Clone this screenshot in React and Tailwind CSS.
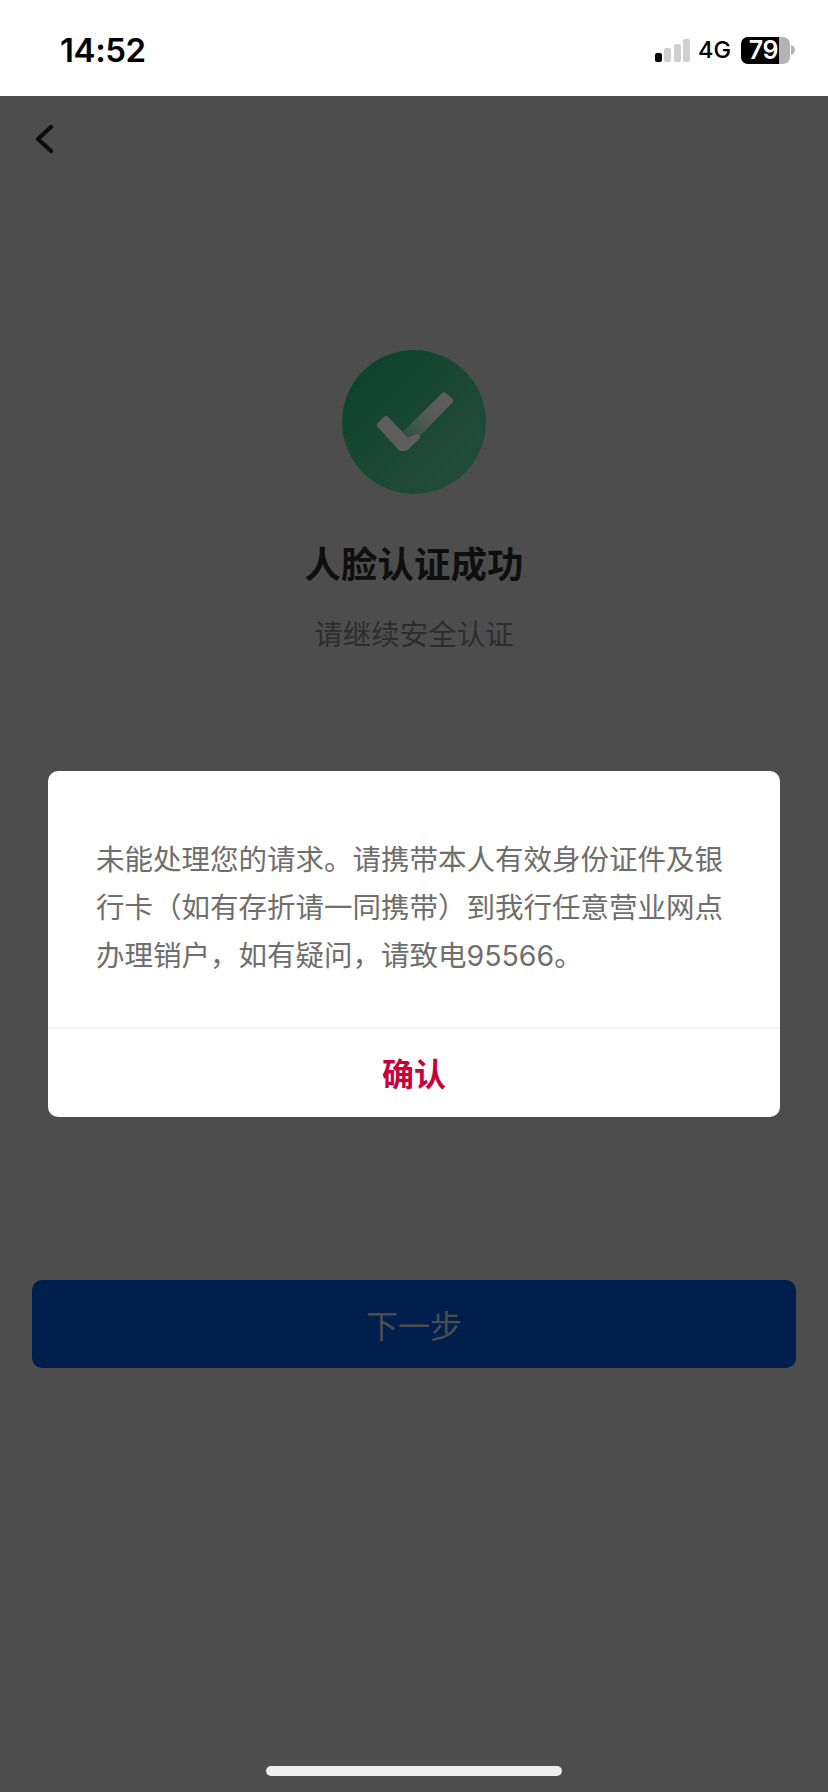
import React from "react";

const cjk = '"Noto Sans CJK SC", "Liberation Sans", sans-serif';

function SignalBars() {
  return (
    <div className="flex items-end gap-[2.5px] h-[23px]">
      <span className="w-[7px] h-[9px] rounded-[2px] bg-black" />
      <span className="w-[7px] h-[14px] rounded-[2px] bg-[#cfcfcf]" />
      <span className="w-[7px] h-[18px] rounded-[2px] bg-[#cfcfcf]" />
      <span className="w-[7px] h-[23px] rounded-[2px] bg-[#cfcfcf]" />
    </div>
  );
}

function Battery() {
  return (
    <div className="flex items-center">
      <div className="w-[49px] h-[27px] rounded-[7px] bg-[#b3b3b3]">
        <div className="w-[38px] h-full pr-[1px] rounded-l-[7px] bg-black flex items-center justify-end text-white text-[25px] font-semibold leading-none font-['Inter'] tracking-[-0.5px]">
          79
        </div>
      </div>
      <svg width="4" height="10" viewBox="0 0 4 10" className="ml-[1px]">
        <path d="M0 0c2.4.6 4 2.6 4 5s-1.6 4.4-4 5z" fill="#b3b3b3" />
      </svg>
    </div>
  );
}

function StatusBar() {
  return (
    <div className="h-[96px] bg-white flex items-center justify-between pl-[60px] pr-[33px] pt-[4px]">
      <span className="text-[33px] font-semibold leading-none text-black font-['Inter'] tracking-[-0.4px]">14:52</span>
      <div className="flex items-center">
        <SignalBars />
        <span className="ml-[8px] mr-[10px] text-[23.5px] font-medium leading-none text-black font-['Inter']">4G</span>
        <Battery />
      </div>
    </div>
  );
}

function SuccessBadge() {
  return (
    <div className="w-[144px] h-[144px] rounded-full bg-gradient-to-br from-[#07432c] to-[#264c3b]">
      <svg width="144" height="144" viewBox="0 0 144 144">
        <defs>
          <linearGradient id="tick" x1="105" y1="48" x2="66" y2="90" gradientUnits="userSpaceOnUse">
            <stop offset="0" stopColor="#5e5e5e" />
            <stop offset="0.45" stopColor="#565b58" />
            <stop offset="1" stopColor="#2c5040" />
          </linearGradient>
        </defs>
        <polygon points="108,50.7 102,45.3 62,85 69,91" fill="url(#tick)" stroke="url(#tick)" strokeWidth="6" strokeLinejoin="round" />
        <polygon points="44,69 65,91 75,87 63,98 59,98 38,75" fill="#5e5e5e" stroke="#5e5e5e" strokeWidth="6" strokeLinejoin="round" />
      </svg>
    </div>
  );
}

function Dialog() {
  return (
    <div className="absolute inset-0 flex items-center justify-center">
      <div className="w-[732px] h-[346px] bg-white rounded-[10px] flex flex-col">
        <div className="h-[258px] border-b-2 border-[#f2f2f2] px-[48px] pt-[65px]">
          <p className="text-[28.5px] leading-[48px] text-[#6e6e6e] font-['Inter','Noto_Sans_CJK_SC',sans-serif]">
            未能处理您的请求。请携带本人有效身份证件及银行卡（如有存折请一同携带）到我行任意营业网点办理销户，如有疑问，请致电95566。
          </p>
        </div>
        <button className="flex-1 pb-[3px] flex items-center justify-center text-[32px] font-bold text-[#c8003c]">
          确认
        </button>
      </div>
    </div>
  );
}

export default function App() {
  return (
    <div className="w-[828px] h-[1792px] flex flex-col overflow-hidden" style={{ fontFamily: cjk }}>
      <StatusBar />
      <main className="relative flex-1 bg-[#4d4d4d] flex flex-col">
        <div className="h-[254px] pl-[35px] pt-[29px]">
          <svg width="18" height="28" viewBox="0 0 18 28" fill="none">
            <path d="M16 2L3 14l13 12" stroke="#0d0d0d" strokeWidth="4.2" strokeLinecap="round" strokeLinejoin="round" />
          </svg>
        </div>
        <div className="flex flex-col items-center">
          <SuccessBadge />
          <h1 className="mt-[43px] text-[36.5px] leading-[52px] font-bold text-[#0f0f0f]">人脸认证成功</h1>
          <p className="mt-[24px] text-[28.5px] leading-[40px] text-[#2e2e2e]">请继续安全认证</p>
        </div>
        <div className="mt-[627px] mx-[32px] h-[88px] rounded-[10px] bg-[#001f4d] flex items-center justify-center text-[32px] text-[#4d4d4d]">
          下一步
        </div>
        <div className="mt-auto mb-[16px] mx-auto w-[296px] h-[10px] rounded-full bg-[#eeeeee]" />
        <Dialog />
      </main>
    </div>
  );
}
